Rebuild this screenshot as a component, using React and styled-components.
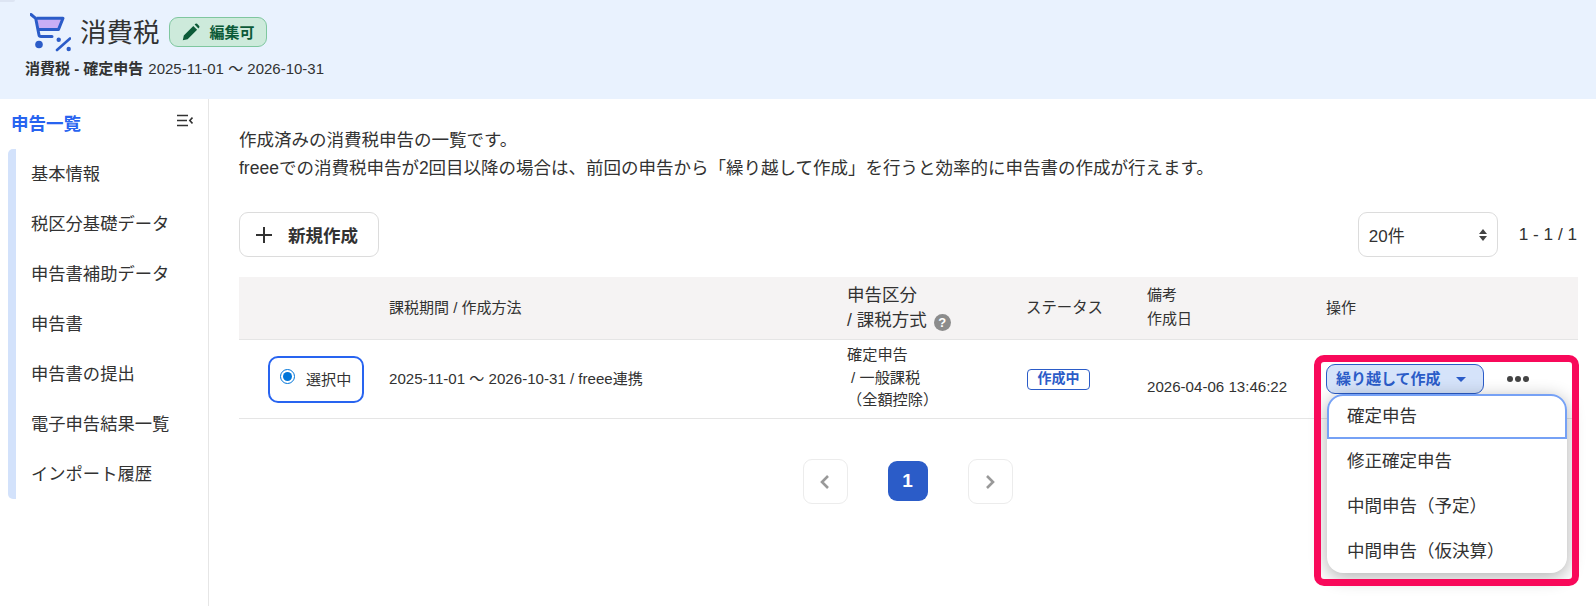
import React from 'react';
import styled, { createGlobalStyle } from 'styled-components';

const FONT = `"Liberation Sans", Arial, "Noto Sans CJK JP", sans-serif`;

const GlobalStyle = createGlobalStyle`
  html, body { margin: 0; padding: 0; background: #fff; }
  body { font-family: ${FONT}; color: #323232; height: 606px; overflow: hidden; }
  * { box-sizing: border-box; }
`;

const Header = styled.header`
  position: relative;
  height: 99px;
  background: #e9f2fe;
  padding: 13px 0 0 25px;
`;
const CornerTab = styled.span`
  position: absolute;
  left: 0;
  top: 0;
  width: 15px;
  height: 2px;
  background: #dde5f3;
  border-radius: 0 0 4px 0;
`;
const TitleRow = styled.div`
  display: flex;
  align-items: center;
  height: 37px;
  padding-left: 5px;
`;
const CartSvg = styled.svg`
  align-self: flex-start;
  flex: none;
`;
const Title = styled.h1`
  margin: 0 9px 3px 9px;
  font-size: 26.5px;
  font-weight: 400;
  color: #323232;
`;
const EditBadge = styled.span`
  display: flex;
  align-items: center;
  gap: 10px;
  height: 30px;
  padding: 0 11px 0 12px;
  background: #cdeadb;
  border: 1px solid #7fc79f;
  border-radius: 9px;
  color: #0c5a38;
  font-size: 15px;
  font-weight: 700;
`;
const SubTitle = styled.div`
  margin-top: 10px;
  font-size: 15px;
  line-height: 18px;
  color: #323232;
  b { font-weight: 700; margin-right: 5px; }
`;

const Body = styled.div`
  display: flex;
  height: 507px;
`;
const Side = styled.aside`
  width: 209px;
  flex: none;
  border-right: 1px solid #e6e6e6;
  padding: 11px 15px 0 8px;
`;
const SideHead = styled.div`
  display: flex;
  justify-content: space-between;
  align-items: flex-start;
  padding-left: 3px;
  height: 39px;
  color: #2864f0;
  font-size: 17.5px;
  font-weight: 700;
  svg { margin-top: 4px; }
`;
const SideList = styled.ul`
  list-style: none;
  margin: 0;
  padding: 0 0 0 15px;
  border-left: 8px solid #d3e2fb;
  border-radius: 5px;
  width: 180px;
`;
const SideItem = styled.li`
  height: 50px;
  padding-bottom: 4px;
  display: flex;
  align-items: center;
  font-size: 17.3px;
  white-space: nowrap;
`;

const Main = styled.main`
  flex: 1;
  min-width: 0;
  padding: 28px 18px 0 30px;
  position: relative;
`;
const Lead = styled.p`
  margin: 0;
  font-size: 17.5px;
  line-height: 27.5px;
  white-space: nowrap;
`;
const Toolbar = styled.div`
  display: flex;
  align-items: center;
  margin-top: 30px;
`;
const NewButton = styled.button`
  display: flex;
  align-items: center;
  gap: 16px;
  width: 140px;
  height: 45px;
  padding: 0 0 0 16px;
  background: #fff;
  border: 1px solid #dcdcdc;
  border-radius: 9px;
  font: 700 17.5px ${FONT};
  color: #323232;
  white-space: nowrap;
`;
const PerPage = styled.div`
  margin-left: auto;
  display: flex;
  align-items: center;
  justify-content: space-between;
  width: 140px;
  height: 45px;
  padding: 0 10px;
  border: 1px solid #dcdcdc;
  border-radius: 9px;
  font-size: 17px;
`;
const Range = styled.div`
  margin: 0 1px 0 21px;
  font-size: 17.2px;
  white-space: nowrap;
`;

const COLS = '150px 458px 179px 121px 179px 1fr';
const TableHead = styled.div`
  display: grid;
  grid-template-columns: ${COLS};
  align-items: center;
  height: 63px;
  margin-top: 20px;
  background: #f5f3f3;
  border-bottom: 1px solid #e5e5e5;
`;
const HeadCell = styled.div`
  grid-column: ${(p) => p.$col};
  font-size: ${(p) => p.$size || 15}px;
  line-height: ${(p) => p.$line || 24}px;
  white-space: nowrap;
`;
const NoteCell = styled(HeadCell)`
  margin-bottom: 3px;
`;
const HelpDot = styled.span`
  display: inline-flex;
  align-items: center;
  justify-content: center;
  width: 17px;
  height: 17px;
  margin-left: 7px;
  border-radius: 50%;
  background: #8c8c8c;
  color: #fff;
  font-size: 13px;
  font-weight: 700;
  line-height: 1;
  vertical-align: -1px;
`;
const TableRow = styled.div`
  display: grid;
  grid-template-columns: ${COLS};
  align-items: center;
  height: 79px;
  border-bottom: 1px solid #e5e5e5;
  font-size: 15.1px;
`;
const RowCell = styled.div`
  white-space: nowrap;
  padding-bottom: 4px;
`;
const SelectedBox = styled.div`
  display: flex;
  align-items: center;
  gap: 11px;
  width: 96px;
  height: 47px;
  margin-left: 29px;
  padding: 0 0 2px 10px;
  border: 2px solid #2864f0;
  border-radius: 10px;
`;
const Radio = styled.input`
  width: 15px;
  height: 15px;
  margin: 0 0 4px;
  flex: none;
  accent-color: #0075d9;
`;
const TypeCell = styled.div`
  font-size: 15.2px;
  line-height: 22.5px;
  white-space: nowrap;
  padding-bottom: 2px;
  span { display: block; }
  span:nth-child(2) { padding-left: 4px; }
`;
const StatusCell = styled.div`
  display: flex;
  padding-left: 1px;
`;
const StatusTag = styled.span`
  width: 63px;
  height: 21px;
  border: 1px solid #2b5cc8;
  border-radius: 4px;
  color: #2b5cc8;
  font-size: 14px;
  font-weight: 700;
  line-height: 17px;
  text-align: center;
`;
const DateCell = styled.div`
  padding-top: 14px;
  white-space: nowrap;
`;
const OpsCell = styled.div`
  display: flex;
  align-items: center;
  gap: 23px;
`;
const CarryButton = styled.button`
  display: flex;
  align-items: center;
  gap: 15px;
  height: 30px;
  width: 158px;
  flex: none;
  padding: 0 0 3px 9px;
  background: #d5e3fa;
  border: 1px solid #2b5cc8;
  border-radius: 9px;
  color: #2b5cc8;
  font: 700 15px ${FONT};
  white-space: nowrap;
`;
const Caret = styled.i`
  width: 0;
  height: 0;
  margin-top: 3px;
  border-left: 5px solid transparent;
  border-right: 5px solid transparent;
  border-top: 5px solid #2b5cc8;
`;
const Dots = styled.span`
  display: flex;
  gap: 2px;
  i { width: 6px; height: 6px; border-radius: 50%; background: #444; }
`;

const Pager = styled.nav`
  display: flex;
  align-items: center;
  justify-content: center;
  margin-top: 40px;
  padding-right: 2px;
  gap: 40px;
`;
const PageArrow = styled.span`
  display: flex;
  align-items: center;
  justify-content: center;
  width: 45px;
  height: 45px;
  border: 1px solid #ececec;
  border-radius: 9px;
`;
const PageNow = styled.span`
  display: flex;
  align-items: center;
  justify-content: center;
  width: 40px;
  height: 40px;
  margin-bottom: 2px;
  background: #2b5cc8;
  border-radius: 9px;
  color: #fff;
  font-size: 19px;
  font-weight: 700;
`;

const Menu = styled.ul`
  position: absolute;
  left: 1118px;
  top: 295px;
  width: 240px;
  height: 179px;
  margin: 0;
  padding: 0;
  list-style: none;
  background: #fff;
  border-radius: 16px;
  box-shadow: 0 4px 18px rgba(0, 0, 0, 0.32);
`;
const MenuItem = styled.li`
  display: flex;
  align-items: center;
  height: 45px;
  padding: 0 0 4px 20px;
  font-size: 17.5px;
  ${(p) => p.$active && `
    border: 2px solid #76a1f5;
    border-radius: 16px 16px 0 0;
    padding-left: 18px;
  `}
`;
const Callout = styled.div`
  position: absolute;
  left: 1105px;
  top: 256px;
  width: 265px;
  height: 231px;
  border: 7px solid #f8095a;
  border-radius: 10px;
  pointer-events: none;
`;

const CartIcon = () => (
  <CartSvg width="41" height="40" viewBox="0 0 41 40" fill="none">
    <path d="M7 5.5 H32.5 L28.5 16 H9 Z" fill="#c9aef5" />
    <path d="M1 1.5 L5.7 5.3 L9 22 Q9.3 23.5 11 23.5 H22" stroke="#2b5cc8" strokeWidth="3" strokeLinecap="round" strokeLinejoin="round" />
    <path d="M6.5 5.3 H33 L28.5 16.5 H9" stroke="#2b5cc8" strokeWidth="3" strokeLinejoin="round" />
    <circle cx="9" cy="31.5" r="3.8" fill="#2b5cc8" />
    <path d="M27 37 L40 25.5" stroke="#2b5cc8" strokeWidth="2.6" strokeLinecap="round" />
    <circle cx="28.7" cy="26.7" r="2.2" fill="#2b5cc8" />
    <circle cx="38.7" cy="36" r="2.2" fill="#2b5cc8" />
  </CartSvg>
);

const PencilIcon = () => (
  <svg width="18" height="18" viewBox="0 0 18 18">
    <path d="M0.8 17.2 L1.8 12.4 L11.3 2.9 L15.1 6.7 L5.6 16.2 Z M12.6 1.6 L13.5 0.8 Q14.3 0.2 15.1 0.8 L17.2 2.9 Q17.8 3.7 17.2 4.5 L16.4 5.4 Z" fill="#0c5a38" />
  </svg>
);

const CollapseIcon = () => (
  <svg width="16" height="13" viewBox="0 0 16 13" fill="none" stroke="#323232" strokeWidth="1.6">
    <path d="M0 1.5 H11 M0 6.5 H10 M0 11.5 H11" />
    <path d="M15.5 3.5 L12.8 6.5 L15.5 9.5" />
  </svg>
);

const PlusIcon = () => (
  <svg width="16" height="16" viewBox="0 0 16 16" stroke="#323232" strokeWidth="2">
    <path d="M8 0 V16 M0 8 H16" />
  </svg>
);

const UpDown = () => (
  <svg width="8" height="14" viewBox="0 0 8 14" fill="#444">
    <path d="M4 1 L8 6 H0 Z M0 8 H8 L4 13 Z" />
  </svg>
);

const Chevron = ({ d }) => (
  <svg width="12" height="16" viewBox="0 0 12 16" fill="none" stroke="#999" strokeWidth="2.6">
    <path d={d} />
  </svg>
);

const sideItems = ['基本情報', '税区分基礎データ', '申告書補助データ', '申告書', '申告書の提出', '電子申告結果一覧', 'インポート履歴'];
const menuItems = ['確定申告', '修正確定申告', '中間申告（予定）', '中間申告（仮決算）'];

export default function App() {
  return (
    <>
      <GlobalStyle />
      <Header>
        <CornerTab />
        <TitleRow>
          <CartIcon />
          <Title>消費税</Title>
          <EditBadge><PencilIcon />編集可</EditBadge>
        </TitleRow>
        <SubTitle><b>消費税 - 確定申告</b>2025-11-01 〜 2026-10-31</SubTitle>
      </Header>
      <Body>
        <Side>
          <SideHead>申告一覧<CollapseIcon /></SideHead>
          <SideList>
            {sideItems.map((s) => <SideItem key={s}>{s}</SideItem>)}
          </SideList>
        </Side>
        <Main>
          <Lead>
            作成済みの消費税申告の一覧です。<br />
            freeeでの消費税申告が2回目以降の場合は、前回の申告から「繰り越して作成」を行うと効率的に申告書の作成が行えます。
          </Lead>
          <Toolbar>
            <NewButton><PlusIcon />新規作成</NewButton>
            <PerPage>20件<UpDown /></PerPage>
            <Range>1 - 1 / 1</Range>
          </Toolbar>
          <TableHead>
            <HeadCell $col={2}>課税期間 / 作成方法</HeadCell>
            <HeadCell $col={3} $size={17.5} $line={25}>申告区分<br />/ 課税方式<HelpDot>?</HelpDot></HeadCell>
            <HeadCell $col={4} $size={15.4}>ステータス</HeadCell>
            <NoteCell $col={5}>備考<br />作成日</NoteCell>
            <HeadCell $col={6}>操作</HeadCell>
          </TableHead>
          <TableRow>
            <SelectedBox>
              <Radio type="radio" defaultChecked />
              選択中
            </SelectedBox>
            <RowCell>2025-11-01 〜 2026-10-31 / freee連携</RowCell>
            <TypeCell>
              <span>確定申告</span>
              <span>/ 一般課税</span>
              <span>（全額控除）</span>
            </TypeCell>
            <StatusCell><StatusTag>作成中</StatusTag></StatusCell>
            <DateCell>2026-04-06 13:46:22</DateCell>
            <OpsCell>
              <CarryButton>繰り越して作成<Caret /></CarryButton>
              <Dots><i /><i /><i /></Dots>
            </OpsCell>
          </TableRow>
          <Pager>
            <PageArrow><Chevron d="M9 2 L3 8 L9 14" /></PageArrow>
            <PageNow>1</PageNow>
            <PageArrow><Chevron d="M3 2 L9 8 L3 14" /></PageArrow>
          </Pager>
          <Menu>
            {menuItems.map((m, i) => <MenuItem key={m} $active={i === 0}>{m}</MenuItem>)}
          </Menu>
          <Callout />
        </Main>
      </Body>
    </>
  );
}
